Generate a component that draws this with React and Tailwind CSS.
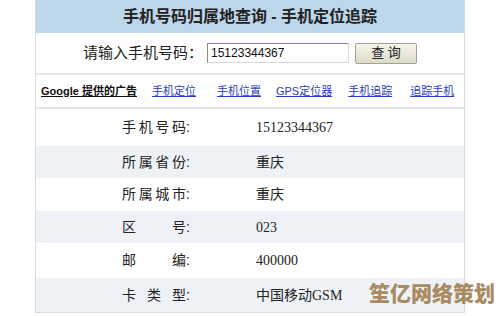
const rows = [
  { label: ["手", "机", "号", "码"], value: "15123344367", h: "h-[37px]" },
  { label: ["所", "属", "省", "份"], value: "重庆", h: "h-[32px]", shade: true },
  { label: ["所", "属", "城", "市"], value: "重庆", h: "h-[33px]" },
  { label: ["区", "号"], value: "023", h: "h-[32px]", shade: true },
  { label: ["邮", "编"], value: "400000", h: "h-[35px]" },
  { label: ["卡", "类", "型"], value: "中国移动GSM", h: "h-[34px]", shade: true },
]

const links = [
  { text: "手机定位", ml: "ml-[15px]" },
  { text: "手机位置", ml: "ml-[21px]" },
  { text: "GPS定位器", ml: "ml-[15px]" },
  { text: "手机追踪", ml: "ml-[16px]" },
  { text: "追踪手机", ml: "ml-[18px]" },
]

const App = () => {
  return (
    <div
      className="relative w-[500px] h-[316px] bg-white overflow-hidden"
      style={{ fontFamily: '"Liberation Sans", "Noto Sans CJK SC", sans-serif' }}
    >
      <div className="ml-[35px] w-[430px] border-x border-b border-[#d3dce5]">
        <div className="h-[33px] bg-[#bdd6ea] flex items-center justify-center text-[16px] font-bold text-[#222]">
          手机号码归属地查询 - 手机定位追踪
        </div>

        <div className="h-[42px] flex items-center pl-[47px] border-b-2 border-[#e2e7ec]">
          <span className="text-[15px] text-[#222] whitespace-nowrap">请输入手机号码：</span>
          <div className="ml-[4px] w-[142px] h-[20px] bg-white border border-t-[#8a8a8a] border-l-[#8a8a8a] border-r-[#d8d8d8] border-b-[#d8d8d8] flex items-center pl-[3px] text-[12px] text-[#111]">
            15123344367
          </div>
          <button className="ml-[6px] w-[62px] h-[21px] bg-gradient-to-b from-[#f7f5ee] to-[#dedac9] border border-[#a7a28f] rounded-[2px] text-[13px] text-[#222] flex items-center justify-center">
            查 询
          </button>
        </div>

        <div className="h-[34px] flex items-center pl-[5px] text-[11px] border-b-2 border-[#e2e7ec] whitespace-nowrap">
          <span className="font-bold underline text-[#111]">Google 提供的广告</span>
          {links.map((l) => (
            <span key={l.text} className={`${l.ml} underline text-[#2a3dbb]`}>
              {l.text}
            </span>
          ))}
        </div>

        {rows.map((r) => (
          <div
            key={r.value + r.label.join("")}
            className={`${r.h} flex items-center text-[14px] text-[#222] ${r.shade ? "bg-[#eef2f7]" : "bg-white"}`}
          >
            <div className="ml-[86px] w-[64px] flex justify-between">
              {r.label.map((t) => (
                <span key={t}>{t}</span>
              ))}
            </div>
            <span className="w-[70px]">:</span>
            <div
              className="text-[14px] text-[#222] whitespace-nowrap"
              style={{ fontFamily: '"Liberation Serif", "Noto Sans CJK SC", serif' }}
            >
              {r.value}
            </div>
          </div>
        ))}
      </div>

      <div className="absolute left-[369px] top-[283px] text-[21px] font-black text-[#a88b63] leading-none whitespace-nowrap">
        笙亿网络策划
      </div>
    </div>
  )
}

export default App
